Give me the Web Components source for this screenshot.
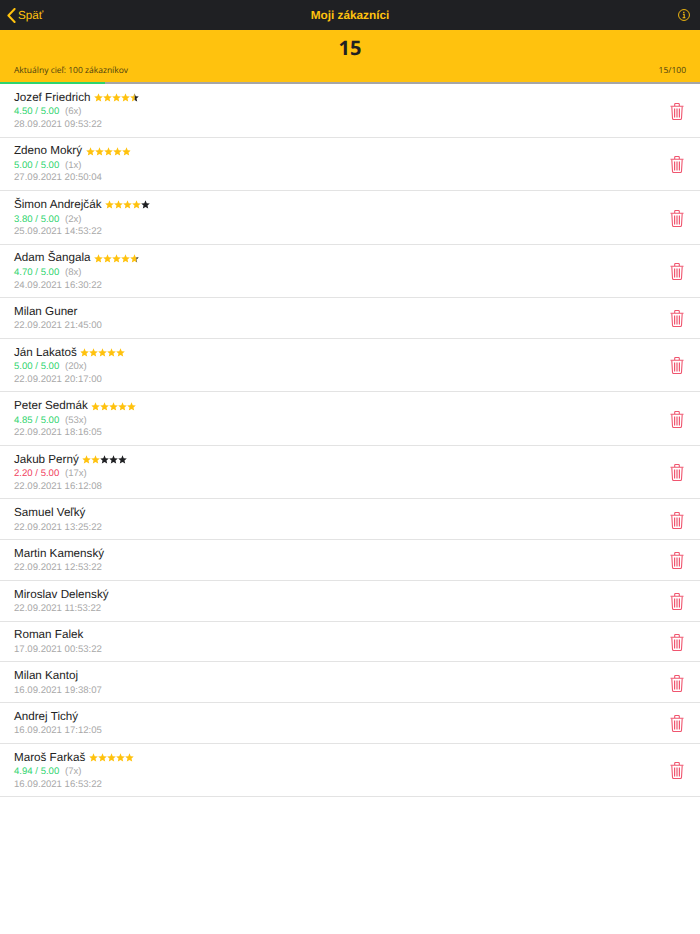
<!DOCTYPE html>
<html lang="sk">
<head>
<meta charset="utf-8">
<title>Moji zákazníci</title>
<style>
  html, body { margin: 0; background: #fff; }
  body { font-family: "Liberation Sans", Arial, sans-serif; text-rendering: geometricPrecision; }
</style>
</head>
<body>
<customers-app></customers-app>
<script>
'use strict';

const customers = [
  { name: 'Jozef Friedrich', rating: '4.50', count: 6, stars: 4.5, date: '28.09.2021 09:53:22' },
  { name: 'Zdeno Mokrý', rating: '5.00', count: 1, stars: 5, date: '27.09.2021 20:50:04' },
  { name: 'Šimon Andrejčák', rating: '3.80', count: 2, stars: 4, date: '25.09.2021 14:53:22' },
  { name: 'Adam Šangala', rating: '4.70', count: 8, stars: 4.7, date: '24.09.2021 16:30:22' },
  { name: 'Milan Guner', date: '22.09.2021 21:45:00' },
  { name: 'Ján Lakatoš', rating: '5.00', count: 20, stars: 5, date: '22.09.2021 20:17:00' },
  { name: 'Peter Sedmák', rating: '4.85', count: 53, stars: 5, date: '22.09.2021 18:16:05' },
  { name: 'Jakub Perný', rating: '2.20', count: 17, stars: 2, low: true, date: '22.09.2021 16:12:08' },
  { name: 'Samuel Veľký', date: '22.09.2021 13:25:22' },
  { name: 'Martin Kamenský', date: '22.09.2021 12:53:22' },
  { name: 'Miroslav Delenský', date: '22.09.2021 11:53:22' },
  { name: 'Roman Falek', date: '17.09.2021 00:53:22' },
  { name: 'Milan Kantoj', date: '16.09.2021 19:38:07' },
  { name: 'Andrej Tichý', date: '16.09.2021 17:12:05' },
  { name: 'Maroš Farkaš', rating: '4.94', count: 7, stars: 5, date: '16.09.2021 16:53:22' }
];

customElements.define(
  'top-bar',
  class TopBar extends HTMLElement {
    constructor() {
      super();
      this.attachShadow({ mode: 'open' }).innerHTML = `
      <style>
      :host {
        display: grid;
        grid-template-columns: 1fr auto 1fr;
        align-items: center;
        height: 30px;
        box-sizing: border-box;
        padding: 0 10px;
        background: #1f2023;
        color: #ffc20e;
        font-size: 11.8px;
      }
      .back { display: flex; align-items: center; gap: 2px; margin-left: -3px; font-size: 11.67px; }
      .title { font-weight: bold; }
      .info { justify-self: end; display: flex; }
      svg { display: block; }
      </style>
      <div class="back">
        <svg width="9" height="15" viewBox="0 0 9 15"><path d="M7.6 1 1.4 7.5l6.2 6.5" fill="none" stroke="currentColor" stroke-width="2" stroke-linecap="round" stroke-linejoin="round"/></svg>
        <span>Späť</span>
      </div>
      <div class="title"><slot></slot></div>
      <div class="info">
        <svg width="12" height="12" viewBox="0 0 13 13" fill="none" stroke="currentColor">
          <circle cx="6.5" cy="6.5" r="5.9" stroke-width="1"/>
          <path d="M5.3 5.6h1.4v3.6M5 9.4h3" stroke-width="1.1"/>
          <path d="M6.3 3.1v1.2" stroke-width="1.4"/>
        </svg>
      </div>
      `;
    }
  }
);

customElements.define(
  'goal-panel',
  class GoalPanel extends HTMLElement {
    connectedCallback() {
      const value = Number(this.getAttribute('value'));
      const target = Number(this.getAttribute('target'));
      this.attachShadow({ mode: 'open' }).innerHTML = `
      <style>
      :host {
        display: block;
        background: #ffc20e;
        color: #4a3c10;
        font-family: "Open Sans", sans-serif;
      }
      .total {
        height: 36px;
        text-align: center;
        font-size: 20px;
        font-weight: bold;
        line-height: 36px;
        color: #1f2023;
      }
      .meta {
        display: flex;
        justify-content: space-between;
        height: 16px;
        padding: 0 14px;
        font-size: 8.5px;
        line-height: 10px;
      }
      .track { height: 2px; background: #a6a6a6; }
      .fill { height: 100%; width: ${(value / target) * 100}%; background: #2fd46e; }
      </style>
      <div class="total">${value}</div>
      <div class="meta">
        <span>Aktuálny cieľ: ${target} zákazníkov</span>
        <span>${value}/${target}</span>
      </div>
      <div class="track"><div class="fill"></div></div>
      `;
    }
  }
);

customElements.define(
  'star-rating',
  class StarRating extends HTMLElement {
    connectedCallback() {
      const filled = (Number(this.getAttribute('filled')) / 5) * 45;
      const star = '<svg width="9" height="9" viewBox="0 0 20 20"><path d="M10 .6l2.7 6.4 6.9.6-5.2 4.5 1.6 6.8-6-3.6-6 3.6 1.6-6.8L.4 7.6l6.9-.6z"/></svg>';
      const row = star.repeat(5);
      this.attachShadow({ mode: 'open' }).innerHTML = `
      <style>
      :host { display: inline-block; position: relative; width: 45px; height: 9px; }
      .row { display: flex; width: 45px; height: 9px; }
      .row svg { flex: none; display: block; }
      .base { fill: #1f2023; clip-path: inset(0 0 0 ${filled}px); }
      .over { position: absolute; left: 0; top: 0; clip-path: inset(0 ${45 - filled}px 0 0); fill: #ffc20e; }
      </style>
      <div class="row base">${row}</div>
      <div class="row over">${row}</div>
      `;
    }
  }
);

customElements.define(
  'trash-icon',
  class TrashIcon extends HTMLElement {
    constructor() {
      super();
      this.attachShadow({ mode: 'open' }).innerHTML = `
      <style>
      :host { display: block; width: 14px; height: 17px; }
      svg { display: block; }
      </style>
      <svg width="14" height="17" viewBox="0 0 14 17" fill="none" stroke="#f0556f" stroke-width="1.1">
        <path d="M.5 3.3h13M4.7 3.1V1.3c0-.5.3-.8.8-.8h3c.5 0 .8.3.8.8v1.8"/>
        <path d="M1.8 3.5l.7 11.8c0 .7.5 1.2 1.2 1.2h6.6c.7 0 1.2-.5 1.2-1.2l.7-11.8"/>
        <path d="M4.6 5.6v8.8M7 5.6v8.8M9.4 5.6v8.8" stroke-width="1.2"/>
      </svg>
      `;
    }
  }
);

customElements.define(
  'customer-row',
  class CustomerRow extends HTMLElement {
    constructor() {
      super();
      this.attachShadow({ mode: 'open' }).innerHTML = `
      <style>
      :host {
        display: flex;
        align-items: center;
        justify-content: space-between;
        box-sizing: border-box;
        padding: 6.65px 16px 5.1px 14px;
        border-bottom: 1px solid #e3e3e3;
      }
      .name { display: flex; align-items: center; gap: 3.5px; height: 14px; font-size: 11.67px; line-height: 14px; color: #222; }
      .score { height: 12.5px; margin-top: 1.8px; font-size: 9.58px; line-height: 12.5px; color: #2fd46e; }
      .score.low { color: #f0405e; }
      .count { margin-left: 3px; color: #a8a8a8; }
      .date { height: 12.5px; font-size: 9.58px; line-height: 12.5px; color: #a8a8a8; }
      .score[hidden] { display: none; }
      .score[hidden] + .date { margin-top: 1.5px; }
      </style>
      <div class="text">
        <div class="name"><span class="label"></span><slot name="stars"></slot></div>
        <div class="score" hidden></div>
        <div class="date"></div>
      </div>
      <trash-icon></trash-icon>
      `;
    }

    set customer(data) {
      const root = this.shadowRoot;
      root.querySelector('.label').textContent = data.name;
      root.querySelector('.date').textContent = data.date;
      const score = root.querySelector('.score');
      score.hidden = !data.rating;
      if (data.rating) {
        score.textContent = `${data.rating} / 5.00 `;
        score.classList.toggle('low', !!data.low);
        const count = document.createElement('span');
        count.className = 'count';
        count.textContent = `(${data.count}x)`;
        score.appendChild(count);
        const stars = document.createElement('star-rating');
        stars.setAttribute('filled', data.stars);
        stars.slot = 'stars';
        this.appendChild(stars);
      }
    }
  }
);

customElements.define(
  'customers-app',
  class CustomersApp extends HTMLElement {
    constructor() {
      super();
      this.attachShadow({ mode: 'open' }).innerHTML = `
      <style>
      :host { display: block; min-height: 934px; background: #fff; }
      </style>
      <top-bar>Moji zákazníci</top-bar>
      <goal-panel value="15" target="100"></goal-panel>
      <div class="list"></div>
      `;
      const list = this.shadowRoot.querySelector('.list');
      customers.forEach((customer) => {
        const row = document.createElement('customer-row');
        row.customer = customer;
        list.appendChild(row);
      });
    }
  }
);
</script>
</body>
</html>
